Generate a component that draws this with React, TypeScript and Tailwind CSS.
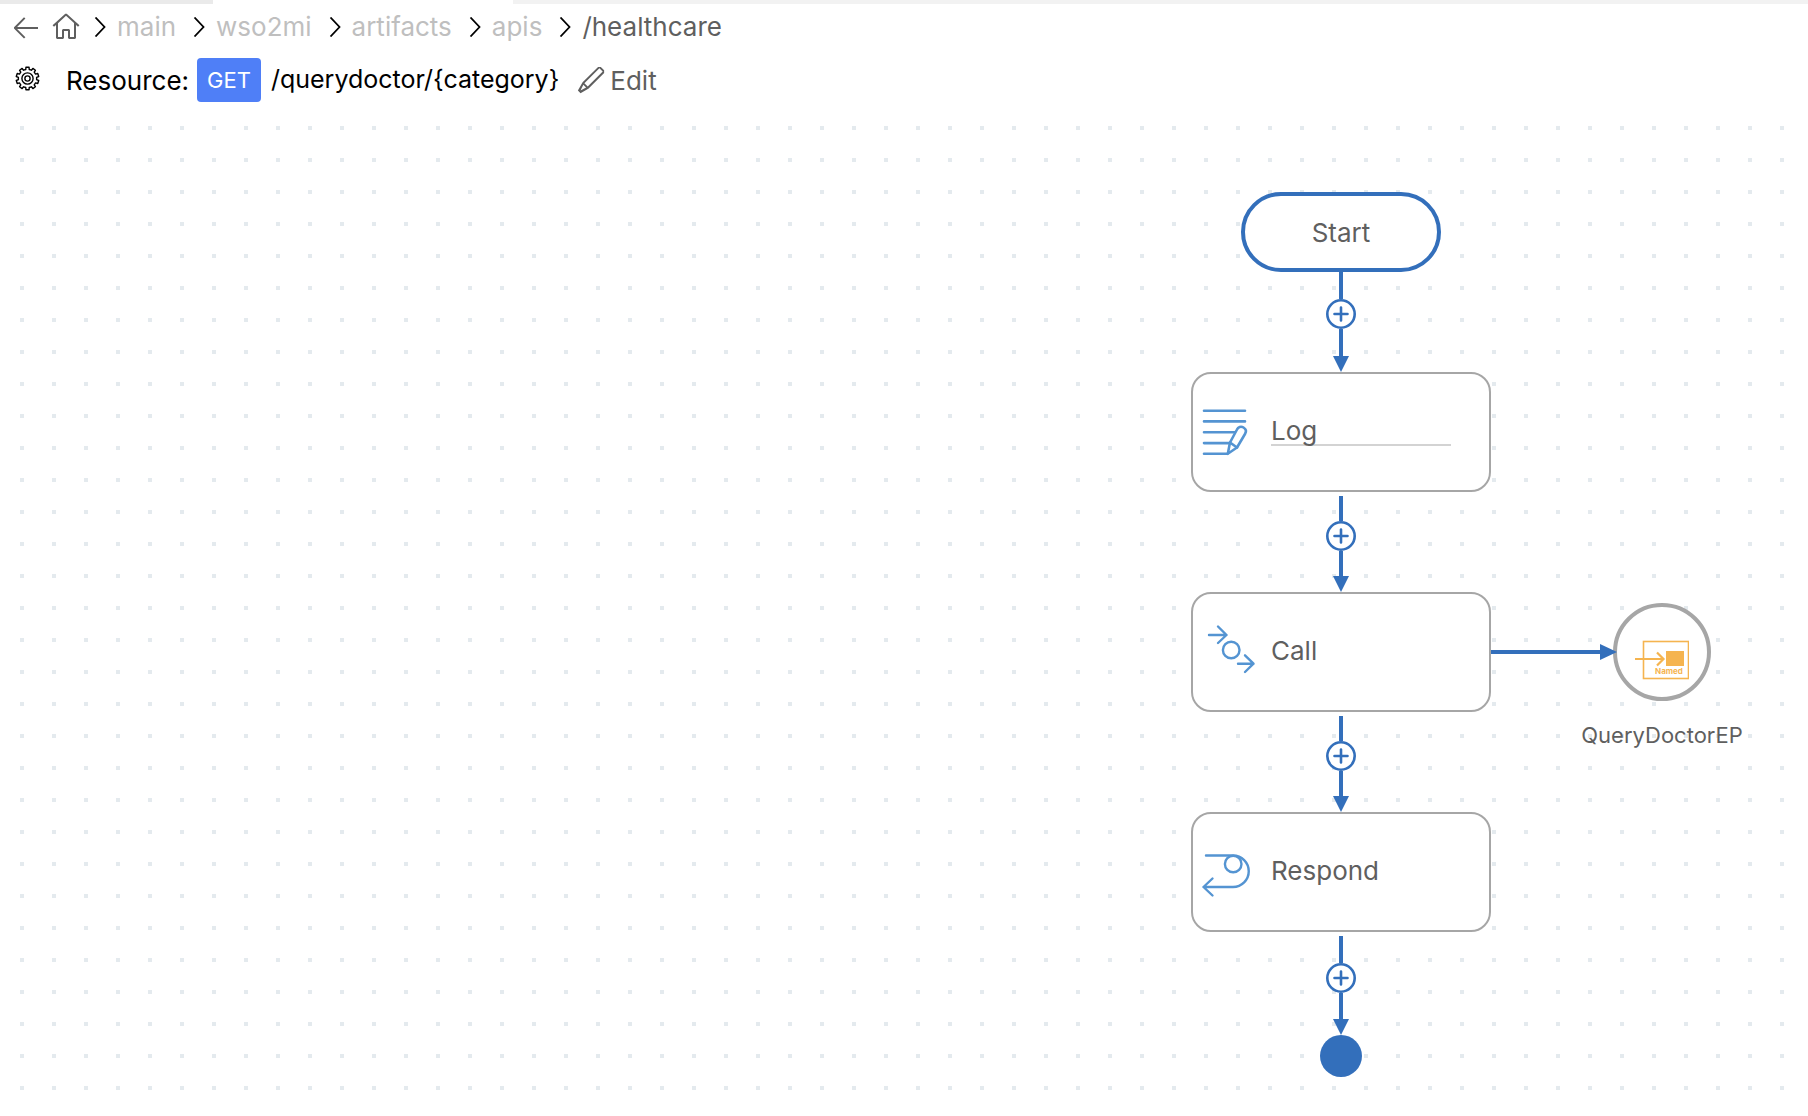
import { type ReactNode } from "react";
import { VscArrowLeft, VscEdit, VscHome } from "react-icons/vsc";

const folders = ["main", "wso2mi", "artifacts", "apis"];

function Chevron() {
  return (
    <svg viewBox="0 0 12 20" className="h-5 w-3 shrink-0" fill="none" stroke="#000" strokeWidth="1.8" aria-hidden="true">
      <path d="M1.5 .5L10.5 10L1.5 19.5" />
    </svg>
  );
}

const TEETH = 10;
const gearPath =
  Array.from({ length: TEETH }, (_, i) => {
    const step = (Math.PI * 2) / TEETH;
    const mid = i * step - Math.PI / 2;
    return [
      [-0.3, 9.2],
      [-0.22, 11.4],
      [0.22, 11.4],
      [0.3, 9.2],
    ]
      .map(([k, r], j) => {
        const a = mid + k * step;
        return `${i === 0 && j === 0 ? "M" : "L"}${(12.5 + r * Math.cos(a)).toFixed(2)} ${(12.5 + r * Math.sin(a)).toFixed(2)}`;
      })
      .join("");
  }).join("") + "Z";

function GearIcon() {
  return (
    <svg viewBox="0 0 25 25" className="size-[25px]" fill="none" stroke="#000" strokeWidth="1.4" strokeLinejoin="round" aria-hidden="true">
      <path d={gearPath} />
      <circle cx="12.5" cy="12.5" r="5.6" />
      <circle cx="12.5" cy="12.5" r="2.6" />
    </svg>
  );
}

function LogIcon() {
  return (
    <svg viewBox="0 1 52 52" className="size-[52px]" fill="none" stroke="#5494d2" strokeWidth="2.6" strokeLinecap="round" strokeLinejoin="round" aria-hidden="true">
      <path d="M5 5.7H46M5 16.4H46M5 27.3H35.5M5 38.1H30.5M5 48.8H28.5" />
      <path d="M31 37.5L38 24.5C39 22 42 21 44.5 22.5C47 24 47.5 26.5 46 29L38 42.5L28.8 48.8Z" />
      <path d="M31 37.5L38 42.5" />
    </svg>
  );
}

function CallIcon() {
  return (
    <svg viewBox="0 0 52 52" className="size-[52px] overflow-visible" fill="none" stroke="#5494d2" strokeWidth="2.4" strokeLinecap="round" strokeLinejoin="round" aria-hidden="true">
      <path d="M10 9H27.5M19 .5L27.5 9L19 17M39 37.7H54.5M46 29.300L54.500 37.700L46 46" />
      <circle cx="32.2" cy="24" r="8.3" />
    </svg>
  );
}

function RespondIcon() {
  return (
    <svg viewBox="0 0 52 52" className="size-[52px]" fill="none" stroke="#5494d2" strokeWidth="2.4" strokeLinecap="round" strokeLinejoin="round" aria-hidden="true">
      <path d="M7 9.5H34A15.7 15.7 0 0 1 34 41H4.5M13.500 32.5L4.5 41L13.500 49.5" />
      <circle cx="34.200" cy="18" r="8.3" />
    </svg>
  );
}

function EndpointIcon() {
  return (
    <svg viewBox="0 0 54 40" className="h-10 w-[54px]" aria-hidden="true">
      <rect x="8.5" y="1.5" width="45" height="37" fill="none" stroke="#f5b44f" strokeWidth="1.6" />
      <rect x="31" y="11" width="18" height="15" fill="#f5b44f" />
      <path d="M0 19H28M22 12.5L28.5 19L22 25.5" fill="none" stroke="#f5b44f" strokeWidth="2.2" />
      <text x="34" y="34" textAnchor="middle" fontSize="8" fontWeight="700" fill="#f5b44f">
        Named
      </text>
    </svg>
  );
}

function Connector({ height, after }: { height: string; after: string }) {
  return (
    <div className={`flex flex-col items-center ${height}`}>
      <span className="w-1 flex-1 bg-[#336fbb]" />
      <button type="button" aria-label={`Add mediator after ${after}`} className="size-[30px] rounded-full">
        <svg viewBox="0 0 30 30" className="size-[30px]" fill="none" stroke="#336fbb" aria-hidden="true">
          <circle cx="15" cy="15" r="13.7" strokeWidth="2.6" fill="#fff" />
          <path d="M15 8.5V21.5M8.5 15H21.5" strokeWidth="2.6" strokeLinecap="round" />
        </svg>
      </button>
      <span className="w-1 flex-1 bg-[#336fbb]" />
      <svg viewBox="0 0 16 16" className="size-4" fill="#336fbb" aria-hidden="true">
        <path d="M0 0H16L8 16Z" />
      </svg>
    </div>
  );
}

function Mediator({ name, icon, underlined, children }: { name: string; icon: ReactNode; underlined?: boolean; children?: ReactNode }) {
  return (
    <div className="relative mb-1 flex h-[120px] w-[300px] items-center gap-5 rounded-[20px] border-2 border-[#a6a6a6] bg-white pl-1.5">
      {icon}
      <span className={`h-7 w-[180px] leading-[26px] ${underlined ? "border-b-2 border-[#d3d3d3]" : ""}`}>{name}</span>
      {children}
    </div>
  );
}

export default function App() {
  return (
    <div className="flex min-h-screen flex-col bg-white font-['Inter',sans-serif] text-[26px] text-[#5f5f5f]">
      <div className="flex h-1 bg-[#f2f2f2]">
        <span className="w-[213px] bg-[#eaeaea]" />
        <span className="w-[300px] bg-white" />
      </div>

      <nav aria-label="Breadcrumb" className="flex h-[46px] items-center pl-2.5 leading-8">
        <button type="button" aria-label="Back">
          <VscArrowLeft className="size-8" />
        </button>
        <button type="button" aria-label="Home" className="ml-2">
          <VscHome className="size-8" />
        </button>
        <ol className="ml-3 flex items-center">
          {folders.map((name) => (
            <li key={name} className="flex items-center">
              <Chevron />
              <a href="#" className="mr-[17px] ml-[11px] text-[#bfbfbf]">
                {name}
              </a>
            </li>
          ))}
          <li className="flex items-center">
            <Chevron />
            <span aria-current="page" className="ml-[11px]">
              /healthcare
            </span>
          </li>
        </ol>
      </nav>

      <header className="flex h-[60px] items-center pl-[15px] text-black">
        <button type="button" aria-label="Settings" className="pb-1">
          <GearIcon />
        </button>
        <h1 className="ml-[26px] flex items-center">
          Resource:
          <span className="mr-2.5 ml-2 rounded bg-[#4f7ff7] px-2.5 text-[22px] leading-[44px] text-white">GET</span>
          <span className="text-[25px]">/querydoctor/&#123;category&#125;</span>
        </h1>
        <button type="button" className="ml-[17px] flex items-center gap-1 text-[#5f5f5f]">
          <VscEdit className="size-[30px]" />
          Edit
        </button>
      </header>

      <main className="relative mt-4 mr-5 ml-5 flex-1 bg-[conic-gradient(from_270deg_at_4px_4px,#e4eaee_90deg,transparent_0)] bg-size-[32px_32px] pb-9">
        <div className="ml-[1171px] flex w-[300px] flex-col items-center pt-[66px]">
          <div className="flex h-20 w-[200px] items-center justify-center rounded-full border-4 border-[#336fbb] bg-white">Start</div>
          <Connector height="h-[100px]" after="Start" />
          <Mediator name="Log" icon={<LogIcon />} underlined />
          <Connector height="h-24" after="Log" />
          <Mediator name="Call" icon={<CallIcon />}>
            <div className="absolute top-[9px] left-[298px] flex items-start">
              <svg viewBox="0 0 126 98" className="z-10 -mr-1 h-[98px] w-[126px]" fill="#336fbb" aria-hidden="true">
                <path d="M0 47V51H109V57L126 49L109 41V47Z" />
              </svg>
              <div className="flex w-[98px] flex-col items-center">
                <div className="flex size-[98px] items-center justify-center rounded-full border-4 border-[#a6a6a6] bg-white pt-4">
                  <EndpointIcon />
                </div>
                <span className="mt-5 text-[22px] leading-7">QueryDoctorEP</span>
              </div>
            </div>
          </Mediator>
          <Connector height="h-24" after="Call" />
          <Mediator name="Respond" icon={<RespondIcon />} />
          <Connector height="h-[99px]" after="Respond" />
          <span className="size-[42px] rounded-full bg-[#336fbb]" />
        </div>
      </main>
    </div>
  );
}
